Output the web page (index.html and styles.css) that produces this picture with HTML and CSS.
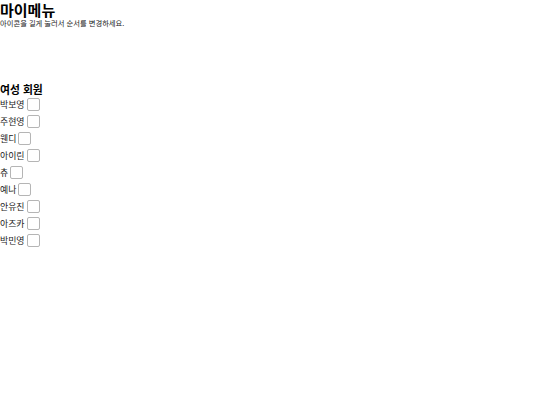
FILE: index.html
```html
<!DOCTYPE html>
<html lang="ko">
<head>
<meta charset="utf-8">
<link rel="stylesheet" href="styles.css">
</head>
<body>
<header class="top">
<h1 class="title">마이메뉴</h1>
<p class="hint">아이콘을 길게 눌러서 순서를 변경하세요.</p>
</header>
<section class="group">
<h2 class="group-title">여성 회원</h2>
<ul class="list">
<li class="item"><label>박보영<input type="checkbox"></label></li>
<li class="item"><label>주현영<input type="checkbox"></label></li>
<li class="item"><label>웬디<input type="checkbox"></label></li>
<li class="item"><label>아이린<input type="checkbox"></label></li>
<li class="item"><label>츄<input type="checkbox"></label></li>
<li class="item"><label>예나<input type="checkbox"></label></li>
<li class="item"><label>안유진<input type="checkbox"></label></li>
<li class="item"><label>아즈카<input type="checkbox"></label></li>
<li class="item"><label>박민영<input type="checkbox"></label></li>
</ul>
</section>
</body>
</html>
```
FILE: styles.css
```css
body {
  margin: 0;
  font-family: "Noto Sans CJK KR", "Noto Sans", sans-serif;
  color: #000;
  background: #fff;
}
.top { margin: 0; padding-top: 1px; }
.title {
  margin: 0;
  font-size: 15px;
  font-weight: bold;
  line-height: 18px;
}
.hint {
  margin: 0;
  font-size: 7.3px;
  line-height: 8px;
  color: #222;
}
.group { margin-top: 56px; }
.group-title {
  margin: 0;
  font-size: 10.8px;
  font-weight: bold;
  line-height: 13px;
}
.list {
  list-style: none;
  margin: 0;
  padding: 0;
}
.item {
  height: 17px;
  display: flex;
  align-items: center;
  font-size: 8.9px;
  color: #222;
}
.item label {
  display: flex;
  align-items: center;
}
.item input {
  appearance: none;
  -webkit-appearance: none;
  margin: 0 0 0 2px;
  width: 13px;
  height: 13px;
  border: 1px solid #b5b5b5;
  border-radius: 2px;
  background: #fff;
  box-sizing: border-box;
}
```
